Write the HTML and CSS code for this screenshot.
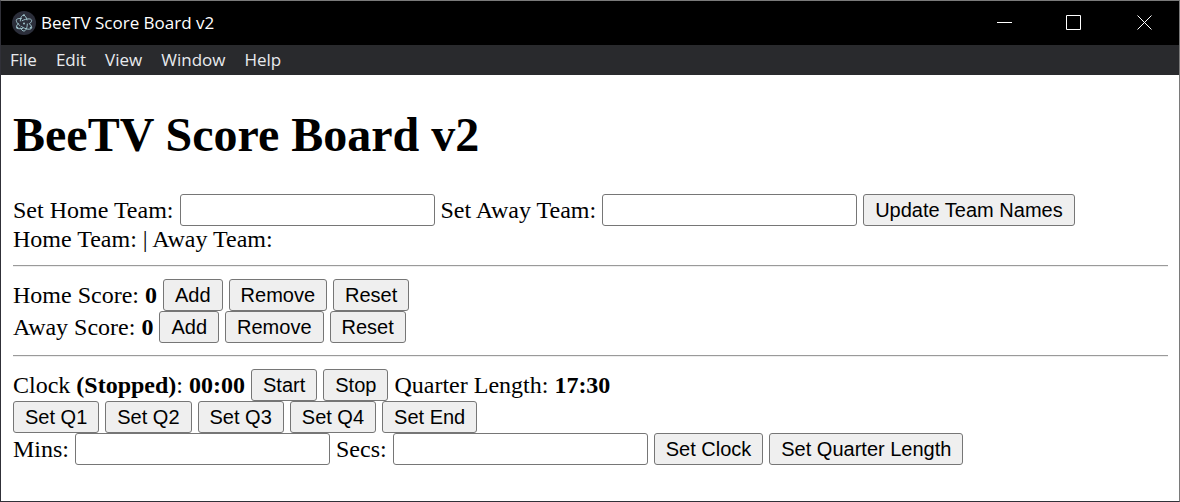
FILE: index.html
```html
<!DOCTYPE html>
<html lang="en">
<head>
<meta charset="utf-8">
<title>BeeTV Score Board v2</title>
<link rel="stylesheet" href="styles.css">
</head>
<body>
<div class="window">
  <header class="titlebar">
    <svg class="app-icon" viewBox="0 0 24 24" aria-hidden="true">
      <circle cx="12" cy="12" r="12" fill="#2b2e3a"/>
      <g fill="none" stroke="#9fc4cc" stroke-width="1" stroke-linecap="round">
        <path d="M9.500 7.600C7 7.200 5.100 7.600 4.500 8.700c-.8 1.400.7 3.800 3.500 6"/>
        <path d="M9.600 15.600c1 .7 2.100 1.300 3.200 1.700 3.200 1.300 6 1.200 6.700-.1.600-1.100-.2-2.800-2-4.500"/>
        <path d="M10.200 9.700c1-.5 2-1 3.100-1.300 2.800-.8 5.300-.7 6.100.4.700 1-.1 2.600-1.900 4.100"/>
        <path d="M6.300 12.500c-1.600 1.600-2.300 3.200-1.700 4.200.7 1.200 3.300 1.400 6.300.6"/>
        <path d="M8.300 10c0-3.300 1.500-5.700 3.200-5.700 1.500 0 2.900 1.900 3.500 4.600"/>
        <path d="M8.600 17c.8 1.900 2 3 3.300 3 1.900 0 3.400-3.200 3.400-7"/>
      </g>
      <g fill="#9fc4cc"><circle cx="12" cy="12.500" r="1"/><circle cx="12" cy="4.200" r="1"/><circle cx="5.300" cy="16.800" r="1"/><circle cx="18.700" cy="16.800" r="1"/></g>
    </svg>
    <span class="title">BeeTV Score Board v2</span>
    <div class="window-controls">
      <button class="window-button" type="button" aria-label="Minimize"><svg class="control-icon" viewBox="0 0 16 16"><path d="M1 7.500h15"/></svg></button>
      <button class="window-button" type="button" aria-label="Maximize"><svg class="control-icon" viewBox="0 0 16 16"><path d="M.5.5h14v14H.5z"/></svg></button>
      <button class="window-button" type="button" aria-label="Close"><svg class="control-icon" viewBox="0 0 16 16"><path d="M1.500.5l14 14M15.500.5l-14 14"/></svg></button>
    </div>
  </header>
  <nav class="menubar" aria-label="Application menu">
    <button class="menu-item" type="button">File</button>
    <button class="menu-item" type="button">Edit</button>
    <button class="menu-item" type="button">View</button>
    <button class="menu-item" type="button">Window</button>
    <button class="menu-item" type="button">Help</button>
  </nav>
  <main class="content">
    <h1 class="heading">BeeTV Score Board v2</h1>
    <div class="row">
      <label for="home-team">Set Home Team:</label>
      <input class="field" id="home-team" type="text">
      <label for="away-team">Set Away Team:</label>
      <input class="field" id="away-team" type="text">
      <button class="action" type="button">Update Team Names</button>
    </div>
    <div class="row">Home Team: | Away Team:</div>
    <hr class="divider">
    <div class="row">
      <span>Home Score: <b>0</b></span>
      <button class="action" type="button">Add</button>
      <button class="action" type="button">Remove</button>
      <button class="action" type="button">Reset</button>
    </div>
    <div class="row">
      <span>Away Score: <b>0</b></span>
      <button class="action" type="button">Add</button>
      <button class="action" type="button">Remove</button>
      <button class="action" type="button">Reset</button>
    </div>
    <hr class="divider">
    <div class="row">
      <span>Clock <b>(Stopped)</b>: <b>00:00</b></span>
      <button class="action" type="button">Start</button>
      <button class="action" type="button">Stop</button>
      <span>Quarter Length: <b>17:30</b></span>
    </div>
    <div class="row">
      <button class="action" type="button">Set Q1</button>
      <button class="action" type="button">Set Q2</button>
      <button class="action" type="button">Set Q3</button>
      <button class="action" type="button">Set Q4</button>
      <button class="action" type="button">Set End</button>
    </div>
    <div class="row">
      <label for="mins">Mins:</label>
      <input class="field" id="mins" type="text">
      <label for="secs">Secs:</label>
      <input class="field" id="secs" type="text">
      <button class="action" type="button">Set Clock</button>
      <button class="action" type="button">Set Quarter Length</button>
    </div>
  </main>
</div>
</body>
</html>
```
FILE: styles.css
```css
* {
  box-sizing: border-box;
}

body {
  margin: 0;
  background: #fff;
  color: #000;
  font: 24px/27px "Liberation Serif", "Times New Roman", serif;
}

.window {
  min-height: 100vh;
  border: 1px solid #7a7a7a;
  border-left-color: #303038;
  border-bottom-color: #303038;
}

.titlebar {
  display: flex;
  align-items: center;
  height: 44px;
  padding-left: 11px;
  background: #000;
  color: #fff;
  font: 17px/24px "Open Sans", "Noto Sans", sans-serif;
}

.app-icon {
  width: 24px;
  height: 24px;
  margin-right: 5px;
}

.window-controls {
  display: flex;
  align-self: stretch;
  margin-left: auto;
}

.window-button {
  display: flex;
  align-items: center;
  justify-content: center;
  width: 70px;
  padding: 0;
  border: 0;
  background: transparent;
}

.control-icon {
  width: 16px;
  height: 16px;
  fill: none;
  stroke: #fff;
  stroke-width: 1;
}

.menubar {
  display: flex;
  gap: 1px;
  height: 30px;
  background: #292a2d;
}

.menu-item {
  padding: 0 9px;
  border: 0;
  background: transparent;
  color: #e8eaed;
  font: 17px/28px "Open Sans", "Noto Sans", sans-serif;
}

.content {
  padding: 32px 11px 32px 12px;
}

.heading {
  margin: 0 0 32px;
  font-size: 48px;
  line-height: 55px;
}

.row {
  display: flex;
  flex-wrap: wrap;
  align-items: center;
  column-gap: 6px;
}

.field,
.action {
  height: 32px;
  border: 1px solid #767676;
  border-radius: 3px;
  color: #000;
  font: 20px/30px "Liberation Sans", Arial, sans-serif;
}

.field {
  width: 255px;
  padding: 0 3px;
  background: #fff;
}

.action {
  padding: 0 11px;
  background: #efefef;
}

.divider {
  height: 2px;
  margin: 12px 0;
  border: 0;
  border-top: 1px solid #9a9a9a;
  border-bottom: 1px solid #eee;
}
```
